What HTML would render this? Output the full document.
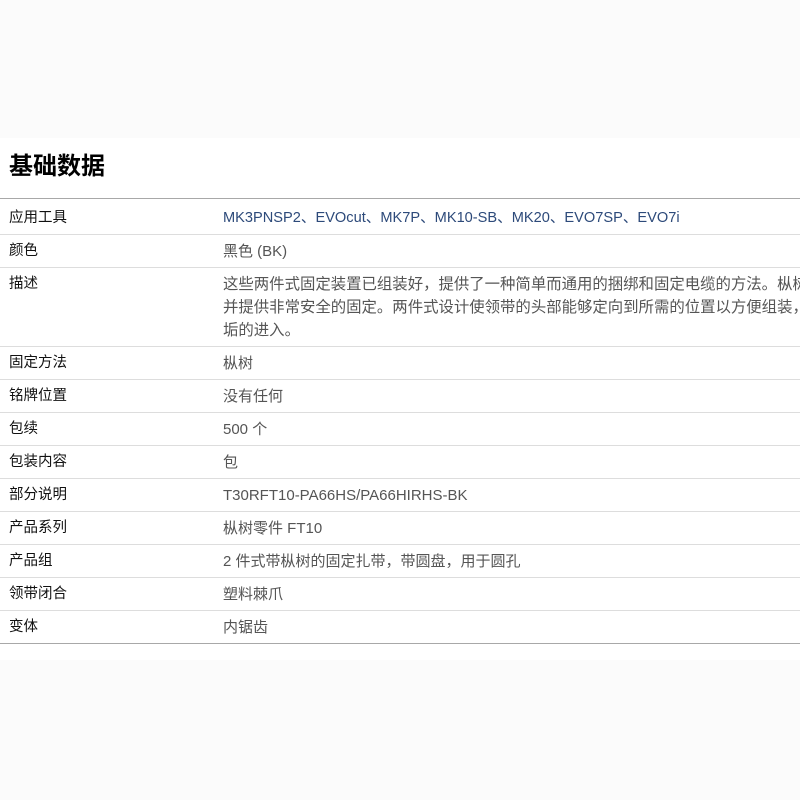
<!DOCTYPE html>
<html><head><meta charset="utf-8"><style>
body{margin:0;width:800px;height:800px;background:#fbfbfb;font-family:"Liberation Sans","Noto Sans CJK SC",sans-serif;overflow:hidden;position:relative}
.w{position:absolute;left:0;top:138px;width:800px;height:522px;background:#fff}
h1{position:absolute;left:9px;top:150px;margin:0;font-size:24px;font-weight:bold;color:#000;line-height:34px}
.l{position:absolute;left:0;width:800px;height:1px;background:#ddd}
.d{background:#a8a8a8}
.k{position:absolute;left:9px;font-size:14.5px;color:#111;line-height:23px;margin-top:1px}
.v{position:absolute;left:223px;font-size:15px;color:#555;line-height:23px;white-space:nowrap;margin-top:1px}
</style></head><body>
<div class="w"></div>
<h1>基础数据</h1>
<div class="l d" style="top:198px"></div>
<div class="k" style="top:206px">应用工具</div><div class="v" style="top:206px;color:#2d4a7a;font-size:14.6px">MK3PNSP2、EVOcut、MK7P、MK10-SB、MK20、EVO7SP、EVO7i</div>
<div class="l" style="top:234px"></div>
<div class="k" style="top:239px">颜色</div><div class="v" style="top:239px">黑色 (BK)</div>
<div class="l" style="top:267px"></div>
<div class="k" style="top:272px">描述</div><div class="v" style="top:272px;font-size:15.4px">这些两件式固定装置已组装好，提供了一种简单而通用的捆绑和固定电缆的方法。枞树<br>并提供非常安全的固定。两件式设计使领带的头部能够定向到所需的位置以方便组装，<br>垢的进入。</div>
<div class="l" style="top:346px"></div>
<div class="k" style="top:351px">固定方法</div><div class="v" style="top:351px">枞树</div>
<div class="l" style="top:379px"></div>
<div class="k" style="top:384px">铭牌位置</div><div class="v" style="top:384px">没有任何</div>
<div class="l" style="top:412px"></div>
<div class="k" style="top:417px">包续</div><div class="v" style="top:417px">500 个</div>
<div class="l" style="top:445px"></div>
<div class="k" style="top:450px">包装内容</div><div class="v" style="top:450px">包</div>
<div class="l" style="top:478px"></div>
<div class="k" style="top:483px">部分说明</div><div class="v" style="top:483px">T30RFT10-PA66HS/PA66HIRHS-BK</div>
<div class="l" style="top:511px"></div>
<div class="k" style="top:516px">产品系列</div><div class="v" style="top:516px">枞树零件 FT10</div>
<div class="l" style="top:544px"></div>
<div class="k" style="top:549px">产品组</div><div class="v" style="top:549px">2 件式带枞树的固定扎带，带圆盘，用于圆孔</div>
<div class="l" style="top:577px"></div>
<div class="k" style="top:582px">领带闭合</div><div class="v" style="top:582px">塑料棘爪</div>
<div class="l" style="top:610px"></div>
<div class="k" style="top:615px">变体</div><div class="v" style="top:615px">内锯齿</div>
<div class="l d" style="top:643px"></div>
</body></html>
